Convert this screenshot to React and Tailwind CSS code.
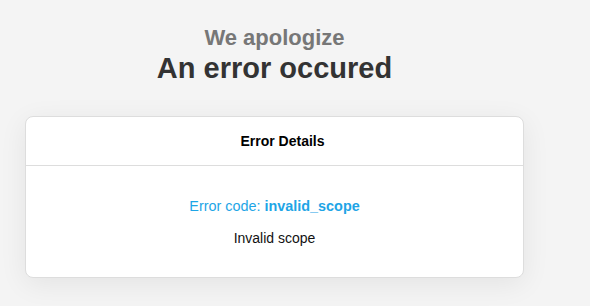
import React from 'react';

const App = () => {
    return (
        <div className="min-h-screen w-full bg-[#f4f4f4] font-['Liberation_Sans',Arial,sans-serif]">
            <div className="ml-[25px] w-[499px] pt-[24px]">
                {/* Heading */}
                <div className="text-center">
                    <h2 className="text-[22px] leading-[28px] font-bold text-[#777777]">We apologize</h2>
                    <h1 className="text-[29px] leading-[32px] font-bold text-[#333333]">An error occured</h1>
                </div>

                {/* Card */}
                <div className="mt-[32px] bg-white border border-[#dddddd] rounded-[8px] shadow-[0_6px_28px_rgba(0,0,0,0.07)]">
                    <div className="h-[49px] pl-[16px] flex items-center justify-center border-b border-[#dddddd]">
                        <span className="text-[14px] font-bold text-black">Error Details</span>
                    </div>
                    <div className="pt-[31px] pb-[30px] text-center text-[14px]">
                        <p className="text-[#1ea5e6] leading-[18px] text-[14.4px]">
                            Error code: <span className="font-bold">invalid_scope</span>
                        </p>
                        <p className="mt-[14px] leading-[18px] text-[#111111]">Invalid scope</p>
                    </div>
                </div>
            </div>
        </div>
    );
};

export default App;
